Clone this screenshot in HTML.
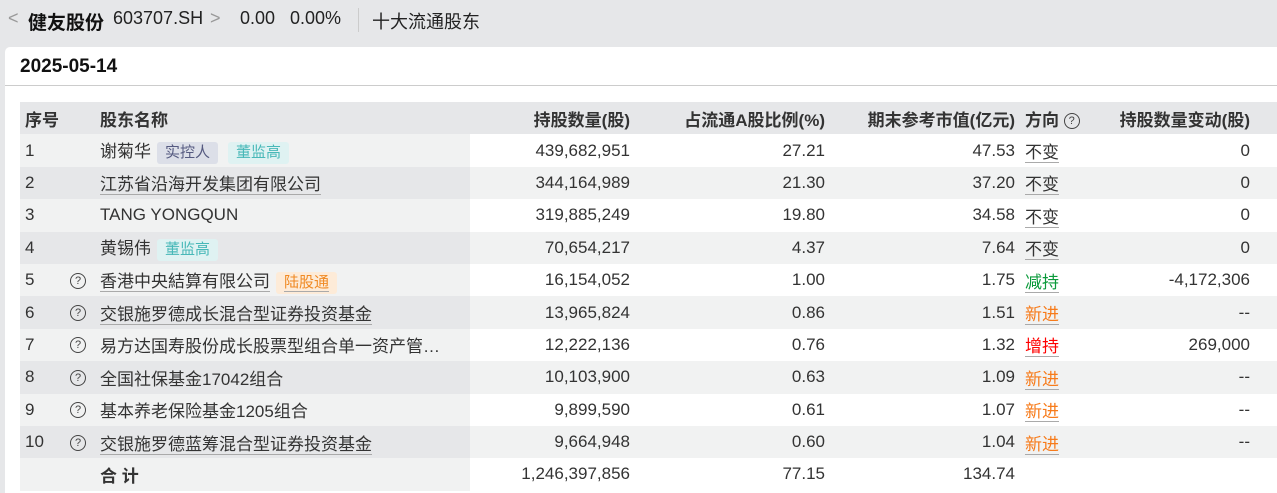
<!DOCTYPE html><html><head><meta charset="utf-8"><style>
*{margin:0;padding:0;box-sizing:border-box}
body{width:1277px;height:493px;overflow:hidden;background:#e6e7e9;font-family:"Liberation Sans","Noto Sans CJK SC",sans-serif;color:#333;font-size:17px}
.top{height:40px;position:relative}
.top span{position:absolute;top:8px;font-size:18px;color:#222}
.card{position:absolute;left:5px;top:47px;right:0;bottom:0;background:#fff;border-radius:5px 0 0 0}
.date{height:39px;border-bottom:1px solid #ccc;font-weight:bold;font-size:19px;padding:9px 0 0 15px;color:#111}
table{position:absolute;left:15px;top:55px;width:1257px;border-collapse:collapse}
td,th{height:32.4px;padding:0;white-space:nowrap;font-weight:normal}
th{font-weight:bold;background:#e6e7e9;color:#333}
.l{text-align:left}.r{text-align:right}
tr.o td.s{background:#f1f2f2}tr.e td.s{background:#e6e7e9}
tr.e td{background:#f1f2f2}
.q{display:inline-block;width:16px;height:16px;border:1.3px solid #444;border-radius:50%;font-size:11px;line-height:14px;text-align:center;color:#444;vertical-align:middle}
.u{border-bottom:1px solid #aaa;padding-bottom:0}
.tag{display:inline-block;font-size:15px;padding:1px 8px;border-radius:3px;margin-left:6px;line-height:20px}
.t1{background:#dcdfe8;color:#555a80}.t2{background:#dff2f2;color:#48b8b8;margin-left:10px}.t3{background:#fdebd8;color:#f08a24}
.g{color:#0a9a3a}.o2{color:#f77b1a}.rd{color:#f00}
</style></head><body>
<div class="top">
<span style="left:8px;color:#999">&lt;</span>
<span style="left:28px;font-weight:bold;font-size:19px;color:#111">健友股份</span>
<span style="left:113px">603707.SH</span>
<span style="left:210px;color:#999">&gt;</span>
<span style="left:240px">0.00</span><span style="left:290px">0.00%</span>
<div style="position:absolute;left:358px;top:8px;width:1px;height:24px;background:#ccc"></div>
<span style="left:372px">十大流通股东</span>
</div>
<div class="card"><div class="date">2025-05-14</div>
<table>
<colgroup><col style="width:50px"><col style="width:30px"><col style="width:370px"><col style="width:160px"><col style="width:195px"><col style="width:190px"><col style="width:82px"><col style="width:153px"><col></colgroup>
<tr><th class="l" style="padding-left:5px">序号</th><th></th><th class="l">股东名称</th><th class="r">持股数量(股)</th><th class="r">占流通A股比例(%)</th><th class="r">期末参考市值(亿元)</th><th class="l" style="padding-left:10px">方向 <span class="q" style="font-weight:normal">?</span></th><th class="r">持股数量变动(股)</th><th></th></tr>
<tr class="o"><td class="s" style="padding-left:5px">1</td><td class="s"></td><td class="s">谢菊华<span class="tag t1">实控人</span><span class="tag t2">董监高</span></td><td class="r">439,682,951</td><td class="r">27.21</td><td class="r">47.53</td><td style="padding-left:10px"><span class="u">不变</span></td><td class="r">0</td><td></td></tr>
<tr class="e"><td class="s" style="padding-left:5px">2</td><td class="s"></td><td class="s"><span class="u">江苏省沿海开发集团有限公司</span></td><td class="r">344,164,989</td><td class="r">21.30</td><td class="r">37.20</td><td style="padding-left:10px"><span class="u">不变</span></td><td class="r">0</td><td></td></tr>
<tr class="o"><td class="s" style="padding-left:5px">3</td><td class="s"></td><td class="s">TANG YONGQUN</td><td class="r">319,885,249</td><td class="r">19.80</td><td class="r">34.58</td><td style="padding-left:10px"><span class="u">不变</span></td><td class="r">0</td><td></td></tr>
<tr class="e"><td class="s" style="padding-left:5px">4</td><td class="s"></td><td class="s">黄锡伟<span class="tag t2" style="margin-left:6px">董监高</span></td><td class="r">70,654,217</td><td class="r">4.37</td><td class="r">7.64</td><td style="padding-left:10px"><span class="u">不变</span></td><td class="r">0</td><td></td></tr>
<tr class="o"><td class="s" style="padding-left:5px">5</td><td class="s"><span class="q">?</span></td><td class="s"><span class="u">香港中央結算有限公司</span><span class="tag t3"><span class="u">陆股通</span></span></td><td class="r">16,154,052</td><td class="r">1.00</td><td class="r">1.75</td><td style="padding-left:10px"><span class="u g">减持</span></td><td class="r">-4,172,306</td><td></td></tr>
<tr class="e"><td class="s" style="padding-left:5px">6</td><td class="s"><span class="q">?</span></td><td class="s"><span class="u">交银施罗德成长混合型证券投资基金</span></td><td class="r">13,965,824</td><td class="r">0.86</td><td class="r">1.51</td><td style="padding-left:10px"><span class="u o2">新进</span></td><td class="r">--</td><td></td></tr>
<tr class="o"><td class="s" style="padding-left:5px">7</td><td class="s"><span class="q">?</span></td><td class="s">易方达国寿股份成长股票型组合单一资产管…</td><td class="r">12,222,136</td><td class="r">0.76</td><td class="r">1.32</td><td style="padding-left:10px"><span class="u rd">增持</span></td><td class="r">269,000</td><td></td></tr>
<tr class="e"><td class="s" style="padding-left:5px">8</td><td class="s"><span class="q">?</span></td><td class="s">全国社保基金17042组合</td><td class="r">10,103,900</td><td class="r">0.63</td><td class="r">1.09</td><td style="padding-left:10px"><span class="u o2">新进</span></td><td class="r">--</td><td></td></tr>
<tr class="o"><td class="s" style="padding-left:5px">9</td><td class="s"><span class="q">?</span></td><td class="s">基本养老保险基金1205组合</td><td class="r">9,899,590</td><td class="r">0.61</td><td class="r">1.07</td><td style="padding-left:10px"><span class="u o2">新进</span></td><td class="r">--</td><td></td></tr>
<tr class="e"><td class="s" style="padding-left:5px">10</td><td class="s"><span class="q">?</span></td><td class="s"><span class="u">交银施罗德蓝筹混合型证券投资基金</span></td><td class="r">9,664,948</td><td class="r">0.60</td><td class="r">1.04</td><td style="padding-left:10px"><span class="u o2">新进</span></td><td class="r">--</td><td></td></tr>
<tr class="o"><td class="s"></td><td class="s"></td><td class="s" style="font-weight:bold">合 计</td><td class="r">1,246,397,856</td><td class="r">77.15</td><td class="r">134.74</td><td></td><td></td><td></td></tr>
</table></div>
</body></html>
